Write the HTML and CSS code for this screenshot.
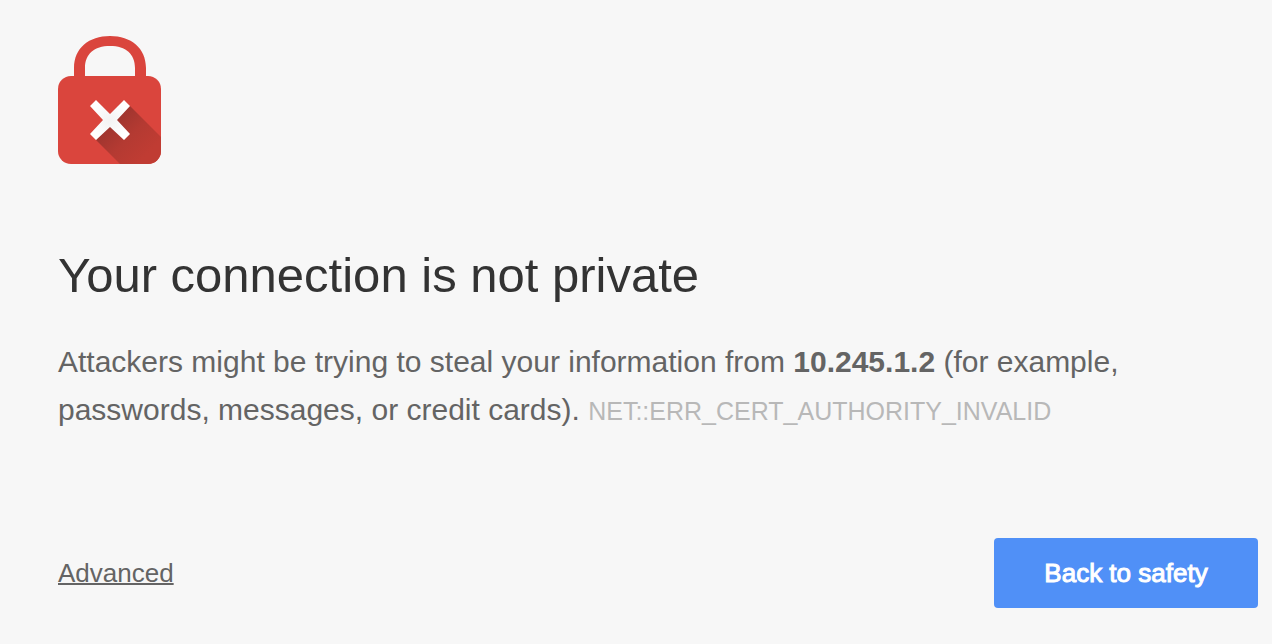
FILE: index.html
```html
<!DOCTYPE html>
<html lang="en">
<head>
<meta charset="utf-8">
<title>Privacy error</title>
<link rel="stylesheet" href="styles.css">
</head>
<body>
<main class="interstitial">
  <svg class="lock" viewBox="0 0 103 128" aria-hidden="true">
    <defs>
      <linearGradient id="shade" gradientUnits="userSpaceOnUse" x1="52" y1="84" x2="88" y2="120">
        <stop offset="0" stop-color="#9c342e"/>
        <stop offset="0.500" stop-color="#b43a32"/>
        <stop offset="1" stop-color="#c03c33"/>
      </linearGradient>
      <radialGradient id="cross" gradientUnits="userSpaceOnUse" cx="52" cy="84" r="20">
        <stop offset="0" stop-color="#f3f3f3"/>
        <stop offset="1" stop-color="#fff"/>
      </radialGradient>
      <clipPath id="case"><rect y="40" width="103" height="88" rx="13"/></clipPath>
    </defs>
    <path d="M16 42V32C16 12 31 0 52 0S88 12 88 32V42H77V32C77 18 68 10 52 10S27 18 27 32V42Z" fill="#da453d"/>
    <rect y="40" width="103" height="88" rx="13" fill="#da453d"/>
    <path clip-path="url(#case)" d="M72 70L103 101V128H62L38 104L52 84Z" fill="url(#shade)"/>
    <path d="M38 64L52 78L66 64L72 70L59 84L72 98L66 104L52 91L38 104L32 98L45 84L32 70Z" fill="url(#cross)"/>
  </svg>
  <h1 class="title">Your connection is not private</h1>
  <p class="message">Attackers might be trying to steal your information from <strong>10.245.1.2</strong> (for example, passwords, messages, or credit cards). <span class="code">NET::ERR_CERT_AUTHORITY_INVALID</span></p>
  <div class="actions">
    <a class="advanced" href="#advanced">Advanced</a>
    <button class="safety" type="button">Back to safety</button>
  </div>
</main>
</body>
</html>
```
FILE: styles.css
```css
body {
  margin: 0;
  background: #f7f7f7;
  color: #646464;
  font-family: "Liberation Sans", Arial, sans-serif;
}

.interstitial {
  padding: 36px 14px 36px 58px;
}

.lock {
  display: block;
  width: 103px;
  height: 128px;
}

.title {
  margin: 80px 0 32px;
  color: #333;
  font-size: 49px;
  font-weight: 400;
  line-height: 62px;
}

.message {
  max-width: 1120px;
  margin: 0;
  font-size: 30px;
  line-height: 48px;
}

.code {
  color: #b8b8b8;
  font-size: 25px;
  line-height: 32px;
}

.actions {
  display: flex;
  align-items: center;
  justify-content: space-between;
  margin-top: 104px;
}

.advanced {
  color: #646464;
  font-size: 26px;
  line-height: 32px;
  text-decoration-thickness: 2px;
}

.safety {
  min-width: 264px;
  padding: 19px 40px;
  border: 0;
  border-radius: 4px;
  background: #5090f7;
  color: #fff;
  font-family: inherit;
  font-size: 26px;
  line-height: 32px;
  -webkit-text-stroke: 1px #fff;
}
```
